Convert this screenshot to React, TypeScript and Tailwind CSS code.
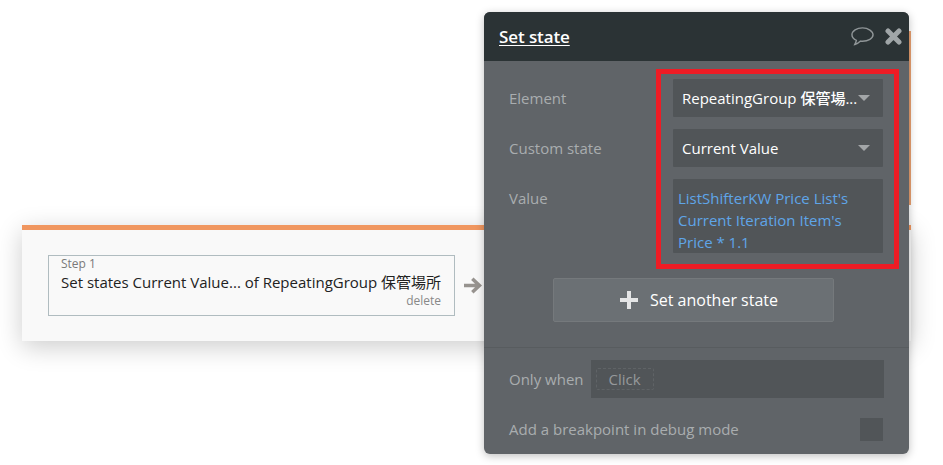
import React from "react";

const font = "font-['Open_Sans','Noto_Sans_CJK_JP',sans-serif]";

function SelectField({ label }: { label: string }) {
  return (
    <div className="flex h-[38px] w-[210px] items-center justify-between gap-px rounded-[1px] bg-[#515558] pl-[9px] pr-[13px]">
      <span className="whitespace-nowrap text-[15px] font-medium text-white">{label}</span>
      <span className="h-0 w-0 shrink-0 border-x-[6px] border-t-[6px] border-x-transparent border-t-[#a3a6a8]" />
    </div>
  );
}

function Row({ label, children }: { label: string; children: React.ReactNode }) {
  return (
    <div className="flex items-start justify-between pl-[25px] pr-[26px]">
      <span className="pt-[8px] text-[15px] leading-[22px] text-[#a9adaf]">{label}</span>
      {children}
    </div>
  );
}

export default function App() {
  return (
    <div className={`relative h-[465px] w-[943px] overflow-hidden bg-white ${font}`}>
      {/* Stripe of the action behind the panel */}
      <div className="absolute left-[905px] top-[31px] h-[174px] w-[6px] bg-[#e8a070]" />

      {/* Step card */}
      <div className="absolute left-[22px] top-[225px] h-[116px] w-[889px] border-t-[5px] border-[#f0965f] bg-[#f9f9f9] pl-[26px] pt-[25px] shadow-[0_6px_24px_rgba(0,0,0,0.2)]">
        <div className="flex items-center gap-[9px]">
          <div className="h-[61px] w-[407px] border border-[#b0bcc0] pl-[12px] pr-[13px]">
            <div className="text-[12px] leading-[15px] text-[#7a7a7a]">Step 1</div>
            <div className="whitespace-nowrap text-[15px] leading-[23px] text-[#222]">
              Set states Current Value... of RepeatingGroup 保管場所
            </div>
            <div className="text-right text-[12px] leading-[14px] text-[#888]">delete</div>
          </div>
          <svg width="18" height="17" viewBox="0 0 18 17" fill="#97938f">
            <path d="M9.500 0.500 18 8.500l-8.500 8-2.400-2.400 3.900-3.800H0V6.700h11L7.100 2.900z" />
          </svg>
        </div>
      </div>

      {/* Property editor */}
      <div className="absolute left-[484px] top-[12px] flex h-[442px] w-[425px] flex-col overflow-hidden rounded-[6px] bg-[#606468] shadow-[0_2px_8px_rgba(0,0,0,0.25)]">
        <div className="flex h-[49px] shrink-0 items-center justify-between bg-[#2b3335] pl-[15px] pr-[7px]">
          <span className="text-[17px] font-semibold tracking-[-0.1px] text-white underline underline-offset-2">Set state</span>
          <div className="flex items-center gap-[11px]">
            <svg width="23" height="21" viewBox="0 0 24 21" fill="none" stroke="#8f9597" strokeWidth="1.5">
              <path d="M12 1.500C6 1.500 1 4.700 1 8.800c0 2.600 2 4.600 4.600 5.800-.3 1.500-.8 2.700-1.600 4.200 2-.5 4.500-2 6-3.500.7.1 1.300.1 2 .1 6 0 11-3 11-6.600S18 1.500 12 1.500z" />
            </svg>
            <svg width="17" height="17" viewBox="0 0 17 17" stroke="#a0a6a8" strokeWidth="5" strokeLinecap="round">
              <path d="M3 3l11 11M14 3 3 14" />
            </svg>
          </div>
        </div>

        <div className="flex flex-col gap-[12px] pt-[18px]">
          <Row label="Element">
            <SelectField label="RepeatingGroup 保管場..." />
          </Row>
          <Row label="Custom state">
            <SelectField label="Current Value" />
          </Row>
          <Row label="Value">
            <div className="h-[74px] w-[210px] rounded-[1px] bg-[#515558] pl-[5px] pr-[30px] pt-[8px] text-[15px] leading-[22px] text-[#5fa5e8]">
              ListShifterKW Price List's Current Iteration Item's Price * 1.1
            </div>
          </Row>
        </div>

        <div className="mt-[25px] flex justify-center pr-[7px]">
          <button className="flex h-[44px] w-[281px] items-center justify-center gap-[12px] rounded-[2px] border border-[#75797c] bg-[#6b7074] pl-[12px] text-[16px] font-medium text-white">
            <svg width="18" height="18" viewBox="0 0 18 18" fill="#e4e5e6">
              <path d="M7 0h4v7h7v4h-7v7H7v-7H0V7h7z" />
            </svg>
            Set another state
          </button>
        </div>

        <div className="mt-[25px] border-t border-[#585c5f]" />

        <div className="mt-[12px] flex items-center pl-[25px] pr-[25px]">
          <span className="text-[15px] text-[#a9adaf]">Only when</span>
          <div className="ml-[7px] flex h-[38px] flex-1 items-center bg-[#515558] pl-[5px]">
            <span className="rounded-[2px] border border-dashed border-[#5f6366] px-[12px] text-[15px] leading-[20px] text-[#96999b]">
              Click
            </span>
          </div>
        </div>

        <div className="mt-[20px] flex items-center justify-between pl-[25px] pr-[26px]">
          <span className="text-[15px] text-[#a9adaf]">Add a breakpoint in debug mode</span>
          <span className="h-[23px] w-[23px] bg-[#515558]" />
        </div>
      </div>

      {/* Red annotation frame */}
      <div className="absolute left-[656px] top-[69px] h-[200px] w-[243px] border-[5px] border-[#ee1c25]" />
    </div>
  );
}
